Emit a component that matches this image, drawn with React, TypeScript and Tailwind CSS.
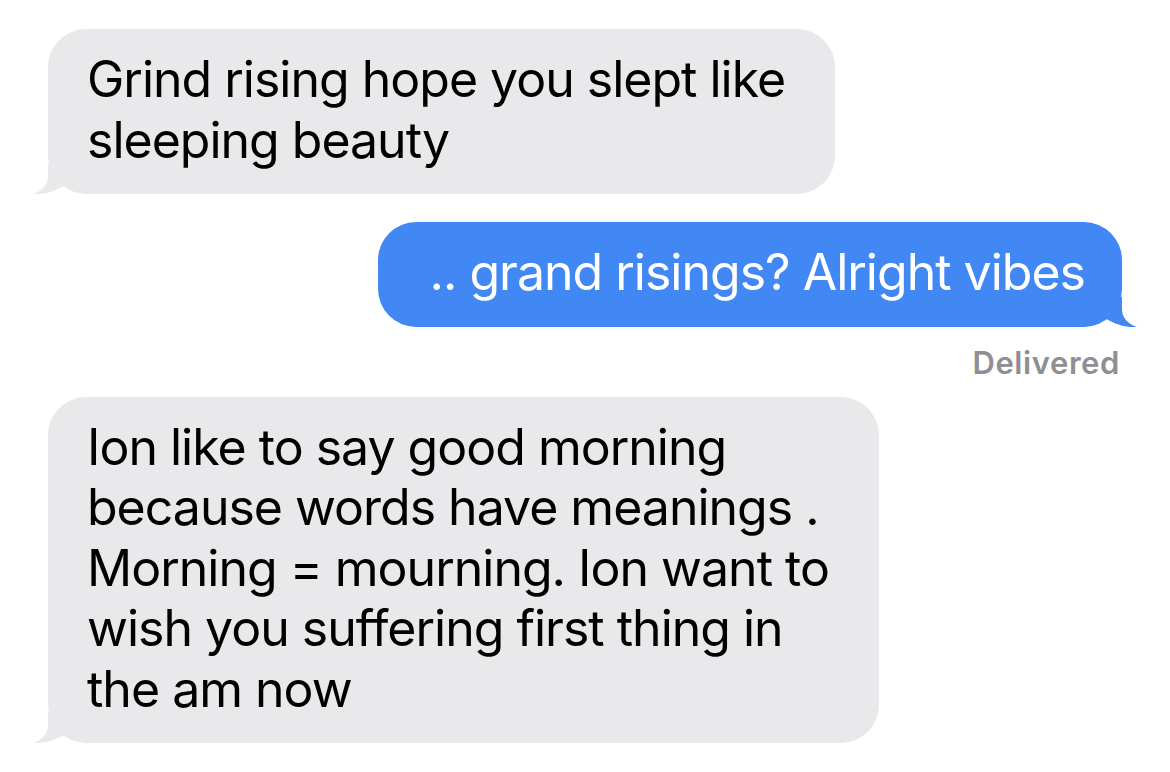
import React from "react";

interface Message {
  id: number;
  fromMe: boolean;
  lines: string[];
}

const messages: Message[] = [
  {
    id: 1,
    fromMe: false,
    lines: ["Grind rising hope you slept like", "sleeping beauty"],
  },
  {
    id: 2,
    fromMe: true,
    lines: [".. grand risings? Alright vibes"],
  },
  {
    id: 3,
    fromMe: false,
    lines: [
      "Ion like to say good morning",
      "because words have meanings .",
      "Morning = mourning. Ion want to",
      "wish you suffering first thing in",
      "the am now",
    ],
  },
];

const Tail = ({ fromMe, color }: { fromMe: boolean; color: string }) => (
  <svg
    width="56"
    height="30"
    viewBox="0 0 56 30"
    className={
      fromMe
        ? "absolute bottom-0 right-[-15px] -scale-x-100"
        : "absolute bottom-0 left-[-15px]"
    }
  >
    <path
      d="M15 0 L15 12 C15 21 9 27 0 30 C11 31 23 27 32 21 C38 26 46 29 56 30 L56 0 Z"
      fill={color}
    />
  </svg>
);

const Bubble = ({ msg }: { msg: Message }) => {
  const color = msg.fromMe ? "#4288f5" : "#e9e9eb";
  return (
    <div
      className={
        msg.fromMe
          ? "relative inline-block rounded-[38px] bg-[#4288f5] text-white pl-[52px] pr-[37px] pt-[20px] pb-[24px]"
          : "relative inline-block rounded-[38px] bg-[#e9e9eb] text-black pl-[39px] pr-[50px] pt-[20px] pb-[24px]"
      }
    >
      <Tail fromMe={msg.fromMe} color={color} />
      <div className="relative text-[50px] leading-[60.5px] tracking-[-1px]">
        {msg.lines.map((line, i) => (
          <div key={i} className="whitespace-nowrap">
            {line}
          </div>
        ))}
      </div>
    </div>
  );
};

export default function App() {
  return (
    <div
      className="w-[1170px] h-[772px] bg-white overflow-hidden flex flex-col pt-[29px]"
      style={{ fontFamily: "Inter, 'Noto Sans', sans-serif" }}
    >
      <div className="pl-[48px]">
        <Bubble msg={messages[0]} />
      </div>
      <div className="flex justify-end pr-[48px] mt-[28px]">
        <Bubble msg={messages[1]} />
      </div>
      <div className="flex justify-end pr-[50px] mt-[18px] text-[31px] font-semibold tracking-[0.6px] text-[#8e8e93] leading-[36px]">
        Delivered
      </div>
      <div className="pl-[48px] mt-[16px]">
        <Bubble msg={messages[2]} />
      </div>
    </div>
  );
}
